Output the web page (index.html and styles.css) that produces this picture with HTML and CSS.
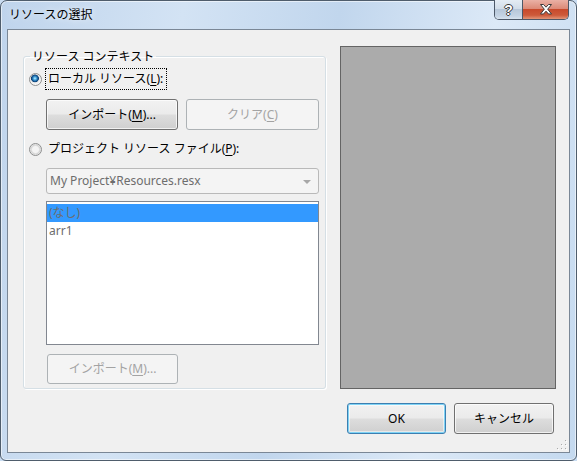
FILE: index.html
```html
<!DOCTYPE html>
<html lang="ja">
<head>
<meta charset="utf-8">
<title>リソースの選択</title>
<link rel="stylesheet" href="styles.css">
</head>
<body>
<div class="window">
  <div class="titlebar">
    <span class="title">リソースの選択</span>
    <div class="caption-buttons">
      <div class="cap help">?</div>
      <div class="cap close">
        <svg width="14" height="11" viewBox="0 0 14 11"><polygon points="1.5,0.5 4.5,0.5 7,3.2 9.5,0.5 12.5,0.5 8.7,5.2 12.5,10 9.5,10 7,7.2 4.5,10 1.5,10 5.3,5.2" fill="#fff" stroke="#3b3b3b" stroke-width="1" stroke-linejoin="round"/></svg>
      </div>
    </div>
  </div>
  <div class="client">
    <div class="main">
      <fieldset class="group">
        <legend class="group-title">リソース コンテキスト</legend>
        <div class="radio-row first">
          <span class="radio checked"></span>
          <span class="radio-label focused">ローカル リソース(<u>L</u>):</span>
        </div>
        <div class="btn-row">
          <button class="btn wide">インポート(<u>M</u>)...</button>
          <button class="btn wide disabled">クリア(<u>C</u>)</button>
        </div>
        <div class="radio-row">
          <span class="radio"></span>
          <span class="radio-label">プロジェクト リソース ファイル(<u>P</u>):</span>
        </div>
        <div class="combo">
          <span class="combo-text">My Project¥Resources.resx</span>
          <span class="combo-arrow"></span>
        </div>
        <div class="list">
          <div class="list-item selected">(なし)</div>
          <div class="list-item">arr1</div>
        </div>
        <button class="btn import-lower disabled">インポート(<u>M</u>)...</button>
      </fieldset>
      <div class="preview"></div>
    </div>
    <div class="footer">
      <button class="btn action default">OK</button>
      <button class="btn action cancel">キャンセル</button>
    </div>
    <svg class="grip" width="10" height="10" viewBox="0 0 10 10">
      <g fill="#fff">
        <rect x="9" y="1" width="1" height="1"/><rect x="9" y="5" width="1" height="1"/><rect x="5" y="5" width="1" height="1"/>
        <rect x="9" y="9" width="1" height="1"/><rect x="5" y="9" width="1" height="1"/><rect x="1" y="9" width="1" height="1"/>
      </g>
      <g fill="#a9a9a9">
        <rect x="8" y="0" width="1" height="1"/><rect x="8" y="4" width="1" height="1"/><rect x="4" y="4" width="1" height="1"/>
        <rect x="8" y="8" width="1" height="1"/><rect x="4" y="8" width="1" height="1"/><rect x="0" y="8" width="1" height="1"/>
      </g>
    </svg>
  </div>
</div>
</body>
</html>
```

FILE: styles.css
```css
* {
  box-sizing: border-box;
}

html, body {
  margin: 0;
  padding: 0;
}

body {
  width: 577px;
  height: 461px;
  overflow: hidden;
  background: #c9dcf1;
  font-family: "Noto Sans", "Noto Sans CJK JP", sans-serif;
  font-size: 12px;
  color: #000;
}

/* Aero glass frame */
.window {
  width: 577px;
  height: 461px;
  display: flex;
  flex-direction: column;
  border: 1px solid #4f5d6c;
  border-radius: 7px 7px 6px 6px;
  background: linear-gradient(100deg, #bfd4ec 0%, #d3e3f4 28%, #c1d6ed 52%, #dce9f7 76%, #c4d9ef 100%);
  box-shadow: inset 0 0 0 1px rgba(255, 255, 255, 0.55);
}

.titlebar {
  height: 28px;
  flex: none;
  display: flex;
  justify-content: space-between;
  align-items: center;
}

.title {
  padding-left: 8px;
  line-height: 16px;
  font-size: 12px;
  color: #000;
  text-shadow: 0 0 6px rgba(255, 255, 255, 0.9);
}

.caption-buttons {
  align-self: flex-start;
  display: flex;
  margin-top: -1px;
  margin-right: 7px;
  height: 20px;
  border: 1px solid #4c5868;
  border-top: none;
  border-radius: 0 0 5px 5px;
  overflow: hidden;
}

.cap {
  height: 19px;
  display: flex;
  align-items: center;
  justify-content: center;
}

.help {
  width: 28px;
  border-right: 1px solid #4c5868;
  background: linear-gradient(#e4ecf4 0%, #d2dde9 45%, #b7c7d9 50%, #c5d4e4 85%, #d8e3ee 100%);
  font-family: "Liberation Sans", sans-serif;
  font-weight: bold;
  font-size: 14px;
  line-height: 14px;
  color: #fff;
  text-shadow: 1px 0 0 #3a3a3a, -1px 0 0 #3a3a3a, 0 1px 0 #3a3a3a, 0 -1px 0 #3a3a3a;
}

.close {
  width: 45px;
  background: linear-gradient(#eab1a5 0%, #dc8a78 45%, #c84a2c 50%, #cd5a3a 80%, #e29578 100%);
}

/* Dialog client area */
.client {
  position: relative;
  flex: 1;
  margin: 0 6px 7px;
  border: 1px solid #7a8796;
  background: #f0f0f0;
  padding: 16px 13px 0 15px;
}

.main {
  display: flex;
  align-items: flex-start;
}

.group {
  margin: 2px 0 0;
  padding: 0;
  width: 303px;
  height: 341px;
  flex: none;
  border: 1px solid #d5dfe5;
  border-radius: 3px;
  box-shadow: inset 1px 1px 0 #fff, 1px 1px 0 #fff;
  min-width: 0;
}

.group-title {
  margin-left: 6px;
  padding: 0 2px;
  line-height: 17px;
  height: 17px;
}

.radio-row {
  display: flex;
  align-items: center;
  height: 22px;
  margin-top: 8px;
}

.radio-row.first {
  margin-top: 3px;
}

.radio {
  width: 13px;
  height: 13px;
  margin-left: 5px;
  border-radius: 50%;
  border: 1px solid #8e8f8f;
  background: radial-gradient(circle at 50% 50%, #f4f4f4 0 3px, #d4d4d4 4.5px, #f6f6f6 6px);
  flex: none;
}

.radio.checked {
  background: radial-gradient(circle at 45% 40%, #c8f0ff 0, #5cb8ea 1.2px, #1d6aa8 2.6px, #0d3e73 3.6px, #e8e8e8 4.2px, #f8f8f8 6px);
}

.radio-label {
  margin-left: 3px;
  padding: 0 3px 0 2px;
  line-height: 20px;
  border: 1px dotted transparent;
}

.radio-label.focused {
  border-color: #000;
}

u {
  text-decoration: underline;
  text-underline-offset: 2px;
}

.btn-row {
  display: flex;
  gap: 8px;
  margin: 9px 0 0 22px;
}

/* Windows 7 push buttons */
.btn {
  font: inherit;
  color: #000;
  height: 31px;
  padding: 0;
  border: 1px solid #707070;
  border-radius: 3px;
  background: linear-gradient(#f2f2f2 0%, #ebebeb 48%, #dddddd 52%, #cfcfcf 100%);
  box-shadow: inset 0 0 0 1px rgba(255, 255, 255, 0.7);
  line-height: 16px;
}

.btn.wide {
  width: 132px;
}

.btn.wide + .btn.wide {
  width: 133px;
}

.btn.disabled {
  color: #a3a3a3;
  border-color: #adb2b5;
  background: #f4f4f4;
  box-shadow: none;
}

.combo {
  display: flex;
  align-items: center;
  justify-content: space-between;
  margin: 8px 0 0 22px;
  width: 273px;
  height: 26px;
  border: 1px solid #b9b9b9;
  border-radius: 3px;
  background: #f4f4f4;
  padding: 0 7px 0 3px;
}

.combo-text {
  color: #6d6d6d;
  line-height: 16px;
}

.combo-arrow {
  width: 0;
  height: 0;
  border-left: 4px solid transparent;
  border-right: 4px solid transparent;
  border-top: 4px solid #a7a7a7;
  margin-top: 2px;
}

.list {
  margin: 7px 0 0 22px;
  width: 273px;
  height: 144px;
  border: 1px solid #828790;
  background: #fff;
  padding-top: 2px;
}

.list-item {
  height: 18px;
  line-height: 18px;
  padding-left: 2px;
  color: #6d6d6d;
}

.list-item.selected {
  background: #3399ff;
}

.btn.import-lower {
  margin: 9px 0 0 23px;
  width: 131px;
  height: 30px;
}

.preview {
  margin-left: 14px;
  width: 216px;
  height: 343px;
  background: #ababab;
  border: 1px solid #646464;
  flex: none;
}

.footer {
  display: flex;
  justify-content: flex-end;
  gap: 8px;
  margin-top: 14px;
  margin-right: 2px;
}

.btn.action {
  width: 100px;
}

.btn.default {
  width: 99px;
  border-color: #3c7fb1;
  box-shadow: inset 0 0 0 1px #7fd3f5, inset 0 0 0 2px rgba(255, 255, 255, 0.5);
}

.grip {
  position: absolute;
  right: 2px;
  bottom: 2px;
}
```
